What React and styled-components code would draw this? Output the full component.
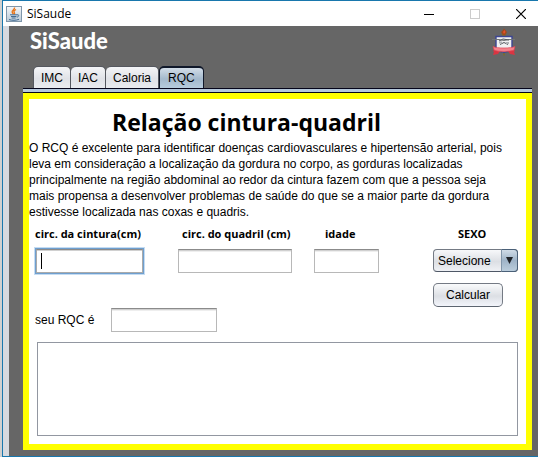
import React from "react";
import styled, { createGlobalStyle, css } from "styled-components";

const GlobalStyle = createGlobalStyle`
  * { box-sizing: border-box; }
  body {
    margin: 0;
    background: #d0d0d0;
    font-family: "Liberation Sans", Arial, sans-serif;
    font-size: 12px;
    color: #000;
  }
  button, input, select, textarea { font: inherit; color: inherit; margin: 0; }
`;

const Desktop = styled.div`
  display: flex;
  min-height: 100vh;
  padding-left: 2px;
`;

const Window = styled.div`
  flex: 1;
  display: flex;
  flex-direction: column;
  min-width: 0;
  border: 1px solid #1877ad;
  border-right: 0;
  background: #fff;
`;

const TitleBar = styled.header`
  display: flex;
  align-items: center;
  height: 25px;
  padding-left: 3px;
`;

const WindowTitle = styled.span`
  flex: 1;
  margin-left: 5px;
  font-family: "Open Sans", sans-serif;
  font-size: 12px;
  line-height: 16px;
`;

const WindowButton = styled.button`
  display: flex;
  align-items: center;
  justify-content: center;
  width: 46px;
  height: 25px;
  padding: 0;
  border: 0;
  background: none;
  color: ${(p) => (p.disabled ? "#cccccc" : "#000")};
`;

const WindowButtons = styled.div`
  display: flex;
  margin-right: -6px;
`;

const Frame = styled.main`
  flex: 1;
  display: flex;
  flex-direction: column;
  padding: 0 6px 6px 14px;
  border-left: 6px solid #d6d9df;
  background: #666;
`;

const Brand = styled.div`
  display: flex;
  justify-content: space-between;
  align-items: flex-start;
  height: 40px;
  padding: 2px 16px 0 7px;
`;

const BrandName = styled.h1`
  margin: 0;
  color: #fff;
  font-family: Lato, sans-serif;
  font-size: 22px;
  font-weight: 900;
  line-height: 26px;
`;

const TabList = styled.div`
  display: flex;
  padding-left: 10px;
`;

const Tab = styled.button`
  height: 22px;
  padding: 0 7px;
  border: 1px solid #55585f;
  border-bottom: 0;
  border-left-width: ${(p) => (p.$first ? "1px" : "0")};
  border-radius: 5px 5px 0 0;
  background: linear-gradient(#f4f5f7, #e0e2e7 55%, #e9ebef);
  ${(p) =>
    p["aria-selected"] &&
    css`
      padding: 0 8px;
      border: 1px solid #10182a;
      border-top-width: 2px;
      border-bottom: 0;
      background: linear-gradient(#d2dde8, #a4b9cc 55%, #b6cbdc);
    `}
`;

const TabBand = styled.div`
  height: 5px;
  border: 1px solid #05051a;
  border-width: 1px 0;
  background: #b5c8dc;
`;

const Panel = styled.section`
  flex: 1;
  display: flex;
  flex-direction: column;
  border: 6px solid #ffff00;
  background: #fff;
`;

const Heading = styled.h2`
  margin: 8px 62px 3px 0;
  text-align: center;
  font-family: "Open Sans", sans-serif;
  font-size: 23px;
  font-weight: 700;
  line-height: 30px;
`;

const Description = styled.p`
  margin: 0;
  line-height: 16px;
`;

const Line = styled.span`
  display: block;
  white-space: nowrap;
`;

const Form = styled.form`
  flex: 1;
  display: flex;
  flex-direction: column;
  padding: 6px 8px 8px 6px;
`;

const Fields = styled.div`
  display: grid;
  grid-template-columns: 143fr 136fr 119fr 85px;
`;

const Field = styled.div`
  display: flex;
  flex-direction: column;
  align-items: flex-start;
`;

const Label = styled.label`
  height: 23px;
  padding-left: ${(p) => p.$indent || 0}px;
  font-family: "Open Sans", sans-serif;
  font-size: 11px;
  font-weight: 700;
  line-height: 16px;
  white-space: nowrap;
`;

const TextInput = styled.input`
  width: ${(p) => p.$width}px;
  height: 24px;
  padding: 0 5px;
  border: 1px solid #b8b8b8;
  border-top-color: #8b8b8b;
  background: linear-gradient(#d0d0d0 0 1px, #eeeeee 1px 2px, #fff 2px);
  outline: none;
  ${(p) =>
    p.$active &&
    css`
      border-color: #aaa;
      border-top-color: #8b8b8b;
      background: linear-gradient(#000, #000) 4px 3px / 1px 16px no-repeat,
        linear-gradient(#d0d0d0 0 1px, #fff 1px);
      margin-left: 1px;
      box-shadow: 0 0 0 1px #6f9fcf, 0 0 0 2px #c5dcf2;
    `}
`;

const SelectBox = styled.div`
  position: relative;
  width: 85px;
  height: 23px;
`;

const Select = styled.select`
  appearance: none;
  width: 100%;
  height: 100%;
  padding: 0 20px 0 4px;
  border: 1px solid #747a84;
  border-bottom-color: #4f5866;
  border-radius: 4px;
  background: linear-gradient(#f7f8fa, #dcdfe4 55%, #eff1f5);
`;

const Arrow = styled.span`
  position: absolute;
  inset: 0 0 0 auto;
  display: flex;
  align-items: center;
  justify-content: center;
  width: 17px;
  border: 1px solid #4a6078;
  border-left-color: #8296aa;
  border-radius: 0 4px 4px 0;
  background: linear-gradient(#d0dce7, #9fb4c8 50%, #bbcddc);
  pointer-events: none;
`;

const Actions = styled.div`
  display: flex;
  justify-content: flex-end;
  margin: 10px 15px 0 0;
`;

const Calculate = styled.button`
  width: 70px;
  height: 24px;
  padding: 0;
  border: 1px solid #747a84;
  border-bottom-color: #5d6570;
  border-radius: 5px;
  background: linear-gradient(#fafbfc, #dcdfe4 55%, #f3f5fb);
`;

const Result = styled.div`
  display: flex;
  align-items: center;
  margin-top: 1px;
`;

const ResultLabel = styled.label`
  width: 76px;
`;

const Output = styled.textarea`
  flex: 1;
  display: block;
  min-height: 94px;
  margin: 10px 0 0 2px;
  border: 1px solid #9297a1;
  background: #fff;
  resize: none;
  outline: none;
`;

function JavaIcon() {
  return (
    <svg width="16" height="16" viewBox="0 0 16 16" fill="none">
      <defs>
        <linearGradient id="tile" x1="0" y1="0" x2="0" y2="1">
          <stop stopColor="#f5f7f9" />
          <stop offset="1" stopColor="#b9c9d7" />
        </linearGradient>
      </defs>
      <rect x=".5" y=".5" width="15" height="15" fill="url(#tile)" stroke="#7f96aa" />
      <path d="M8.5 1.5C9 4 5.5 4 6.2 6.2c.2.8.8 1.200 1 2.100M10 3.500c-2 1.200-2.600 1.700-1.700 3 .5.8.4 1.200-.2 1.800" stroke="#e8761c" strokeWidth="1.400" />
      <path d="M4 8.800h7M5 10.500h5.400M5.600 12h4M11 8.800c2.700-.4 2 2-.2 2.400M3 13.500c3 1.200 7 1 10-.2" stroke="#426b93" />
    </svg>
  );
}

function Crest() {
  return (
    <svg width="24" height="28" viewBox="0 0 24 28" fill="none">
      <path d="M11 22h2v5l-1 1-1-1z" fill="#786b32" />
      <path d="M9.500 4h5L13.500 9h-3z" fill="#8a6a24" />
      <path d="M12 0c0 2 3 2 2.700 4.500L13 7h-2L9.300 4.500C9 3 12 2 12 0z" fill="#a3481c" />
      <path d="M12.500 2l1 2-1.500 2-1-2z" fill="#e5522a" />
      <path d="M4 8.500h16V20c0 3-5 3.500-8 4.500C9 23.500 4 23 4 20z" fill="#f0f1f2" stroke="#3c4594" strokeWidth="1.400" />
      <path d="M0 11.500h7l5 1 5-1h6" stroke="#6f7477" strokeWidth="1.200" />
      <path d="M7 13l4-2 6 1M8 16.500l4-2 4 2" stroke="#50565a" />
      <path d="M7 14.500h3M14 15h3" stroke="#aeb3b6" strokeWidth="2" />
      <path d="M3 21l-2 2 1 1-1 3 5-1 2-3zM21 21l2 2-1 1 1 3-5-1-2-3z" fill="#da3542" />
      <path d="M1 18.500c4 2 18 2 22 0l-1 3.500c-4 2-16 2-20 0z" fill="#f4828c" stroke="#df4654" strokeWidth=".7" />
    </svg>
  );
}

const TABS = ["IMC", "IAC", "Caloria", "RQC"];

const DESCRIPTION = [
  "O RCQ é excelente para identificar doenças cardiovasculares e hipertensão arterial, pois",
  "leva em consideração a localização da gordura no corpo, as gorduras localizadas",
  "principalmente na região abdominal ao redor da cintura fazem com que a pessoa seja",
  "mais propensa a desenvolver problemas de saúde do que se a maior parte da gordura",
  "estivesse localizada nas coxas e quadris.",
];

export default function App() {
  return (
    <>
      <GlobalStyle />
      <Desktop>
        <Window>
          <TitleBar>
            <JavaIcon />
            <WindowTitle>SiSaude</WindowTitle>
            <WindowButtons>
              <WindowButton aria-label="Minimizar">
                <svg width="10" height="10"><path d="M0 5.500h10" stroke="currentColor" /></svg>
              </WindowButton>
              <WindowButton aria-label="Maximizar" disabled>
                <svg width="10" height="10"><rect x=".5" y=".5" width="9" height="9" fill="none" stroke="currentColor" /></svg>
              </WindowButton>
              <WindowButton aria-label="Fechar">
                <svg width="10" height="10"><path d="M0 0l10 10M10 0L0 10" stroke="currentColor" strokeWidth="1.200" /></svg>
              </WindowButton>
            </WindowButtons>
          </TitleBar>
          <Frame>
            <Brand>
              <BrandName>SiSaude</BrandName>
              <Crest />
            </Brand>
            <TabList role="tablist">
              {TABS.map((name, i) => (
                <Tab key={name} type="button" role="tab" $first={i === 0} aria-selected={name === "RQC"}>
                  {name}
                </Tab>
              ))}
            </TabList>
            <TabBand />
            <Panel>
              <Heading>Relação cintura-quadril</Heading>
              <Description>
                {DESCRIPTION.map((line) => (
                  <Line key={line}>{line} </Line>
                ))}
              </Description>
              <Form onSubmit={(e) => e.preventDefault()}>
                <Fields>
                  <Field>
                    <Label htmlFor="cintura">circ. da cintura(cm)</Label>
                    <TextInput id="cintura" $width={107} $active />
                  </Field>
                  <Field>
                    <Label htmlFor="quadril" $indent={4}>circ. do quadril (cm)</Label>
                    <TextInput id="quadril" $width={114} />
                  </Field>
                  <Field>
                    <Label htmlFor="idade" $indent={11}>idade</Label>
                    <TextInput id="idade" $width={65} />
                  </Field>
                  <Field>
                    <Label htmlFor="sexo" $indent={25}>SEXO</Label>
                    <SelectBox>
                      <Select id="sexo">
                        <option>Selecione</option>
                      </Select>
                      <Arrow>
                        <svg width="7" height="7"><path d="M0 0h7L3.500 7z" fill="#20242a" /></svg>
                      </Arrow>
                    </SelectBox>
                  </Field>
                </Fields>
                <Actions>
                  <Calculate type="submit">Calcular</Calculate>
                </Actions>
                <Result>
                  <ResultLabel htmlFor="rqc">seu RQC é</ResultLabel>
                  <TextInput id="rqc" $width={106} readOnly />
                </Result>
                <Output aria-label="Resultado" readOnly />
              </Form>
            </Panel>
          </Frame>
        </Window>
      </Desktop>
    </>
  );
}
